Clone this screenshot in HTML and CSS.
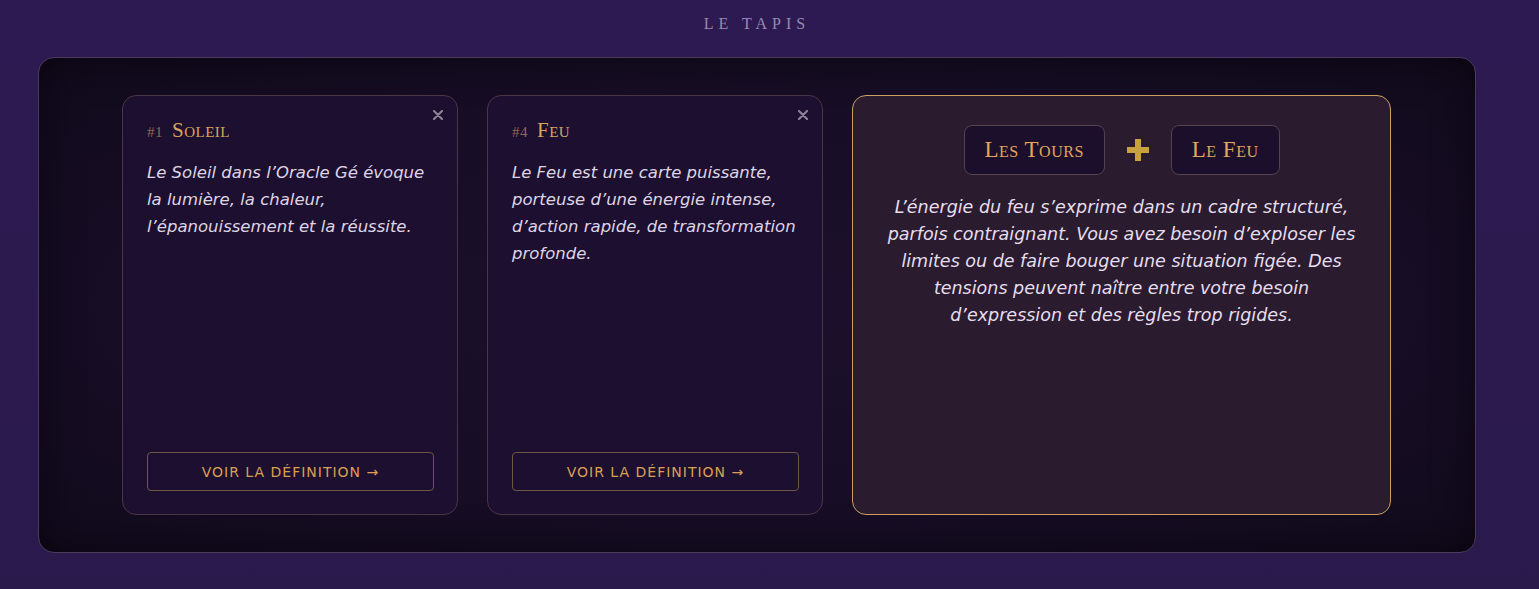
FILE: index.html
```html
<!DOCTYPE html>
<html lang="fr">
<head>
    <meta charset="UTF-8">
    <title>Le Tapis</title>
    <link rel="stylesheet" href="styles.css">
</head>
<body>
    <main class="board">
        <h2 class="board-title">Le Tapis</h2>
        <section class="tapis">
            <div class="spread">
                <article class="card">
                    <button class="card-close" type="button" aria-label="Retirer">
                        <svg width="10" height="10" viewBox="0 0 10 10"><path d="M1 1L9 9M9 1L1 9" stroke="currentColor" stroke-width="2.2" stroke-linecap="round"/></svg>
                    </button>
                    <h3 class="card-name"><span class="card-num">#1</span>Soleil</h3>
                    <p class="card-text">Le Soleil dans l’Oracle Gé évoque la lumière, la chaleur, l’épanouissement et la réussite.</p>
                    <a class="card-link" href="#">Voir la définition →</a>
                </article>
                <article class="card">
                    <button class="card-close" type="button" aria-label="Retirer">
                        <svg width="10" height="10" viewBox="0 0 10 10"><path d="M1 1L9 9M9 1L1 9" stroke="currentColor" stroke-width="2.2" stroke-linecap="round"/></svg>
                    </button>
                    <h3 class="card-name"><span class="card-num">#4</span>Feu</h3>
                    <p class="card-text">Le Feu est une carte puissante, porteuse d’une énergie intense, d’action rapide, de transformation profonde.</p>
                    <a class="card-link" href="#">Voir la définition →</a>
                </article>
                <article class="reading">
                    <div class="pair">
                        <span class="pill">Les Tours</span>
                        <svg class="plus" width="22" height="22" viewBox="0 0 22 22"><path d="M8 0h6v8h8v6h-8v8H8v-8H0V8h8z" fill="#c9a23f"/></svg>
                        <span class="pill">Le Feu</span>
                    </div>
                    <p class="reading-text">L’énergie du feu s’exprime dans un cadre structuré, parfois contraignant. Vous avez besoin d’exploser les limites ou de faire bouger une situation figée. Des tensions peuvent naître entre votre besoin d’expression et des règles trop rigides.</p>
                </article>
            </div>
        </section>
    </main>
</body>
</html>
```

FILE: styles.css
```css
body,h2,h3,p{margin:0;}
body{
    background:#2c1a50;
    background:linear-gradient(180deg,#2e1a52 0%,#2a1a4c 100%);
    min-height:589px;
    font-family:"DejaVu Sans","Noto Sans",sans-serif;
}
.board{
    width:1438px;
    padding:14px 0 0 38px;
}
.board-title{
    text-align:center;
    font-family:"Liberation Serif",serif;
    font-weight:normal;
    font-size:16px;
    line-height:20px;
    letter-spacing:5px;
    text-transform:uppercase;
    color:#978aae;
    margin-bottom:23px;
}
.tapis{
    height:496px;
    border:1px solid #4a3a5c;
    border-radius:16px;
    background:radial-gradient(ellipse at center,#1c102c 0%,#170d25 60%,#110a1b 100%);
    box-shadow:inset 0 0 40px rgba(5,2,10,0.55);
    padding-top:37px;
    box-sizing:border-box;
}
.spread{
    display:flex;
    gap:29px;
    padding-left:83px;
}
.card{
    position:relative;
    width:336px;
    height:420px;
    box-sizing:border-box;
    padding:22px 22px 23px 24px;
    border:1px solid #4b3646;
    border-radius:14px;
    background:#1d0f2f;
    display:flex;
    flex-direction:column;
}
.card-close{
    position:absolute;
    top:14px;
    right:14px;
    padding:0;
    border:none;
    background:none;
    color:#8a8296;
    cursor:pointer;
    line-height:0;
}
.card-name{
    font-family:"Liberation Serif",serif;
    font-weight:normal;
    font-variant:small-caps;
    font-size:21px;
    line-height:24px;
    color:#d9a55b;
    letter-spacing:0.5px;
}
.card-num{
    font-variant:normal;
    font-size:15px;
    color:#8d6a55;
    margin-right:9px;
}
.card-text{
    margin-top:15px;
    font-style:italic;
    font-size:16.5px;
    line-height:27px;
    color:#ddd4e6;
}
.card-link{
    margin-top:auto;
    margin-right:1px;
    display:block;
    height:39px;
    line-height:38px;
    box-sizing:border-box;
    border:1px solid #6f5646;
    border-radius:4px;
    text-align:center;
    text-decoration:none;
    text-transform:uppercase;
    font-size:14px;
    letter-spacing:1px;
    color:#d9a055;
}
.reading{
    width:539px;
    height:420px;
    box-sizing:border-box;
    padding:29px 24px;
    border:1px solid #c9a05e;
    border-radius:14px;
    background:#2a1c2e;
}
.pair{
    display:flex;
    justify-content:center;
    align-items:center;
    gap:22px;
}
.pill{
    height:50px;
    box-sizing:border-box;
    padding:0 20px;
    border:1px solid #54424f;
    border-radius:8px;
    background:#1c0f2b;
    display:flex;
    align-items:center;
    font-family:"Liberation Serif",serif;
    font-variant:small-caps;
    font-size:23px;
    letter-spacing:0.5px;
    color:#e2a65c;
}
.reading-text{
    margin-top:19px;
    text-align:center;
    font-style:italic;
    font-size:17.5px;
    line-height:27px;
    color:#e6def0;
}
```
